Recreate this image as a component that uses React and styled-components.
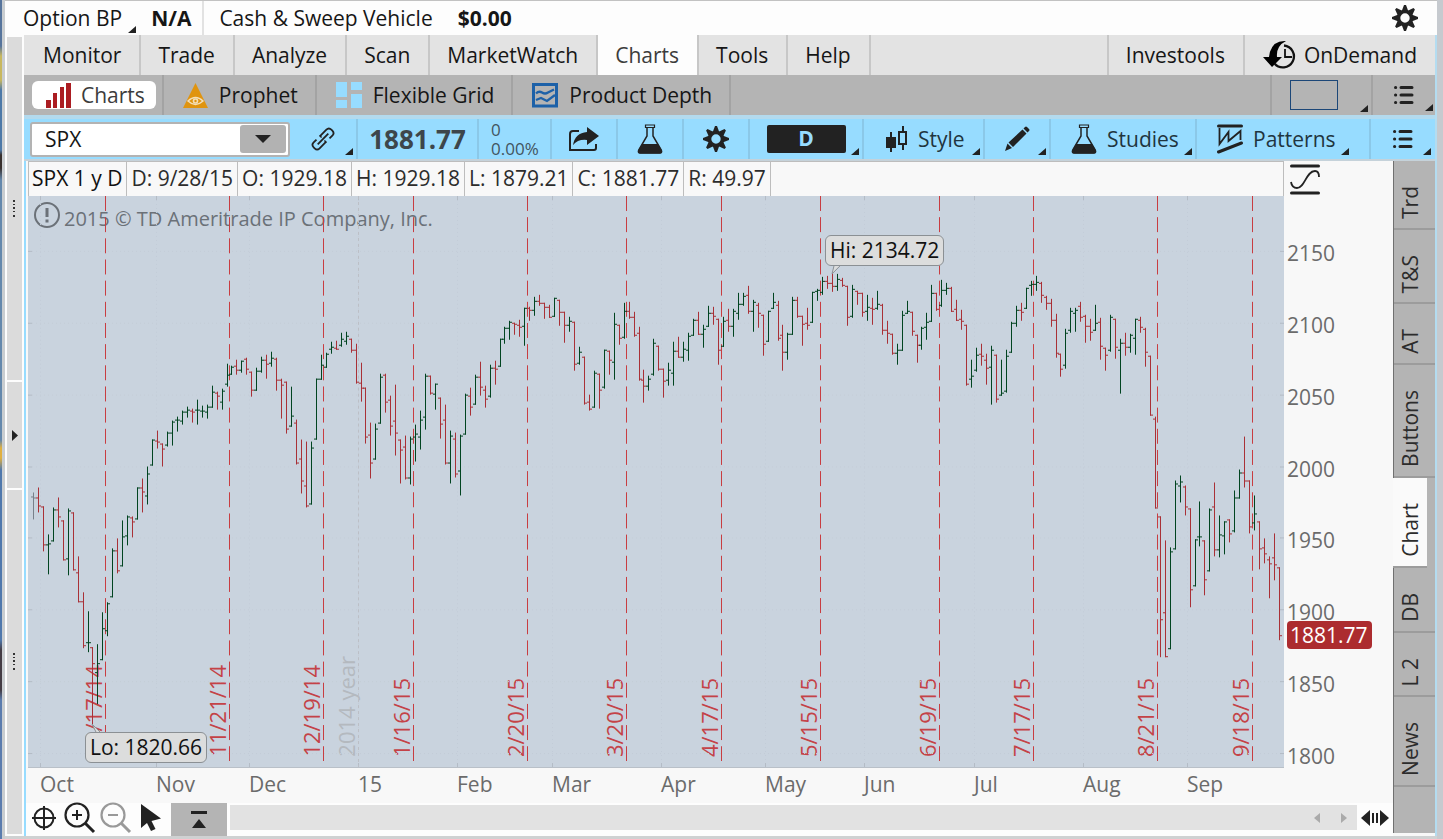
import React from 'react';
import styled, { createGlobalStyle, css } from 'styled-components';

const GlobalStyle = createGlobalStyle`
  * {
    box-sizing: border-box;
  }
  body {
    margin: 0;
    font-family: 'Open Sans', 'Noto Sans', sans-serif;
    font-size: 21px;
    line-height: 28px;
    color: #161616;
    background: #c6cacf;
  }
  button,
  input {
    font: inherit;
    color: inherit;
    margin: 0;
    padding: 0;
    border: 0;
    background: none;
  }
  svg {
    display: block;
    flex: none;
  }
`;

/* price bars: open, high, low, close as heights on the plot, oldest first */
const BARS = [
  [497, 493, 519, 498], [498, 488, 512, 506], [507, 507, 551, 545], [545, 535, 574, 544],
  [541, 508, 541, 510], [510, 498, 527, 517], [521, 521, 560, 560], [559, 509, 575, 511],
  [513, 513, 570, 570], [573, 557, 602, 602], [602, 593, 648, 646], [643, 612, 652, 643],
  [648, 648, 724, 664], [673, 645, 704, 664], [660, 613, 660, 629], [631, 603, 636, 604],
  [597, 549, 597, 551], [551, 539, 573, 571], [566, 521, 566, 537], [536, 516, 545, 517],
  [518, 517, 537, 522], [519, 488, 519, 488], [488, 479, 512, 492], [496, 467, 504, 474],
  [465, 440, 465, 440], [441, 431, 448, 442], [444, 444, 466, 449], [445, 432, 446, 433],
  [433, 421, 445, 422], [420, 417, 431, 420], [421, 411, 424, 412], [412, 407, 417, 410],
  [411, 409, 422, 412], [410, 400, 424, 410], [411, 406, 417, 411], [412, 405, 418, 407],
  [407, 386, 407, 392], [393, 392, 409, 396], [402, 389, 409, 391], [384, 364, 386, 375],
  [374, 366, 374, 367], [366, 360, 374, 370], [370, 361, 372, 361], [359, 358, 374, 369],
  [372, 372, 396, 390], [390, 368, 390, 371], [371, 357, 372, 360], [360, 355, 378, 364],
  [363, 352, 366, 358], [359, 358, 390, 380], [380, 379, 418, 385], [382, 382, 433, 429],
  [426, 387, 426, 416], [423, 420, 464, 463], [459, 440, 493, 481], [486, 442, 507, 506],
  [504, 442, 504, 448], [439, 379, 439, 379], [379, 355, 379, 365], [367, 353, 367, 354],
  [349, 342, 353, 347], [348, 341, 349, 349], [345, 333, 346, 339], [341, 332, 344, 336],
  [339, 339, 352, 350], [350, 344, 383, 382], [383, 363, 401, 388], [388, 388, 443, 437],
  [435, 423, 478, 463], [459, 424, 459, 429], [423, 374, 423, 377], [375, 374, 412, 402],
  [400, 396, 435, 426], [421, 385, 455, 433], [440, 440, 483, 450], [447, 436, 479, 478],
  [478, 437, 484, 439], [437, 425, 461, 434], [437, 411, 449, 420], [417, 374, 429, 376],
  [376, 376, 394, 393], [394, 384, 409, 384], [398, 398, 438, 424], [420, 405, 464, 463],
  [463, 431, 483, 436], [439, 433, 477, 474], [471, 435, 495, 436], [434, 394, 434, 395],
  [396, 388, 415, 407], [404, 375, 404, 377], [377, 362, 395, 387], [390, 386, 407, 399],
  [396, 365, 397, 368], [368, 361, 384, 369], [366, 339, 366, 339], [339, 327, 343, 328],
  [328, 321, 339, 322], [323, 323, 334, 324], [325, 320, 336, 327], [326, 308, 345, 308],
  [308, 307, 320, 310], [310, 297, 315, 301], [301, 295, 305, 303], [303, 303, 318, 307],
  [307, 305, 317, 317], [316, 298, 316, 298], [300, 300, 325, 312], [312, 312, 342, 325],
  [325, 317, 331, 321], [322, 322, 370, 364], [363, 347, 364, 352], [357, 357, 404, 403],
  [402, 395, 410, 409], [407, 371, 407, 373], [374, 374, 408, 390], [387, 350, 388, 350],
  [351, 351, 374, 360], [362, 313, 379, 324], [325, 325, 344, 338], [337, 303, 338, 311],
  [311, 302, 318, 317], [317, 312, 336, 335], [333, 327, 380, 379], [380, 370, 402, 386],
  [386, 376, 390, 379], [374, 339, 375, 343], [346, 346, 370, 369], [369, 369, 397, 381],
  [380, 363, 385, 370], [373, 342, 385, 351], [351, 337, 357, 357], [357, 342, 361, 349],
  [350, 333, 360, 336], [335, 319, 335, 320], [320, 312, 334, 334], [334, 325, 347, 329],
  [326, 306, 326, 313], [313, 307, 324, 316], [319, 319, 364, 350], [346, 317, 346, 321],
  [320, 309, 331, 326], [326, 309, 336, 311], [313, 293, 319, 304], [304, 293, 305, 296],
  [295, 286, 313, 311], [311, 300, 331, 302], [305, 303, 327, 313], [315, 315, 355, 344],
  [341, 311, 341, 311], [308, 293, 308, 302], [305, 301, 340, 338], [335, 325, 370, 352],
  [352, 333, 359, 334], [334, 297, 334, 300], [300, 297, 317, 316], [316, 316, 345, 324],
  [323, 308, 329, 325], [322, 292, 322, 292], [291, 289, 300, 290], [292, 277, 294, 281],
  [281, 276, 288, 283], [283, 273, 291, 286], [286, 274, 290, 279], [280, 278, 286, 285],
  [286, 286, 325, 317], [316, 285, 317, 289], [291, 291, 304, 293], [293, 293, 316, 312],
  [311, 295, 320, 307], [308, 298, 324, 309], [308, 291, 309, 304], [305, 304, 334, 330],
  [330, 321, 343, 333], [334, 334, 354, 353], [353, 344, 364, 350], [350, 311, 350, 315],
  [313, 301, 313, 311], [312, 312, 335, 331], [335, 335, 362, 345], [345, 327, 349, 328],
  [327, 313, 339, 322], [321, 285, 321, 293], [293, 293, 310, 309], [305, 280, 306, 290],
  [290, 283, 294, 288], [288, 287, 311, 311], [309, 300, 320, 320], [319, 310, 329, 321],
  [325, 325, 385, 384], [379, 360, 387, 376], [370, 348, 371, 355], [354, 344, 365, 356],
  [360, 354, 384, 368], [367, 346, 404, 350], [355, 355, 402, 399], [395, 360, 395, 393],
  [391, 350, 392, 356], [352, 322, 352, 323], [323, 306, 326, 310], [310, 303, 320, 312],
  [308, 288, 308, 288], [285, 281, 295, 284], [284, 276, 290, 282], [283, 282, 302, 295],
  [297, 296, 309, 303], [303, 299, 326, 320], [320, 314, 357, 353], [354, 354, 376, 369],
  [365, 329, 368, 333], [330, 308, 332, 311], [313, 308, 331, 310], [306, 302, 321, 317],
  [316, 315, 342, 326], [326, 319, 340, 332], [330, 305, 330, 323], [322, 318, 359, 346],
  [348, 348, 370, 355], [350, 315, 351, 317], [319, 319, 358, 347], [350, 339, 393, 343],
  [343, 333, 355, 347], [347, 334, 352, 335], [338, 319, 354, 319], [320, 317, 332, 327],
  [329, 328, 366, 352], [356, 356, 415, 415], [419, 417, 508, 508], [517, 517, 657, 620],
  [613, 541, 657, 657], [649, 548, 649, 552], [549, 481, 549, 484], [486, 476, 502, 482],
  [487, 486, 515, 507], [509, 509, 607, 590], [586, 540, 586, 540], [537, 502, 546, 537],
  [541, 541, 595, 580], [571, 509, 571, 510], [507, 483, 556, 550], [550, 516, 557, 535],
  [536, 522, 554, 522], [520, 520, 542, 534], [531, 491, 532, 498], [498, 470, 498, 473],
  [473, 437, 487, 481], [481, 481, 533, 527], [523, 496, 530, 514], [522, 522, 569, 549],
  [548, 539, 563, 554], [560, 557, 598, 564], [558, 534, 580, 565], [568, 568, 640, 636],
];

const PLOT = { left: 28, top: 196, width: 1256, height: 572 };
const FIRST_BAR = 33;
const LAST_BAR = 1279;

const EXPIRIES = [
  [105, '10/17/14'], [229, '11/21/14'], [323, '12/19/14'], [413, '1/16/15'],
  [527, '2/20/15'], [626, '3/20/15'], [721, '4/17/15'], [820, '5/15/15'],
  [939, '6/19/15'], [1033, '7/17/15'], [1157, '8/21/15'], [1252, '9/18/15'],
];

const MONTHS = [
  [40, 'Oct', 116], [156, 'Nov', 93], [249, 'Dec', 109], [358, '15', 99],
  [457, 'Feb', 95], [552, 'Mar', 109], [661, 'Apr', 104], [765, 'May', 99],
  [864, 'Jun', 110], [974, 'Jul', 109], [1083, 'Aug', 104], [1187, 'Sep', 97],
];

const PRICES = [2150, 2100, 2050, 2000, 1950, 1900, 1850, 1800];
const PRICE_LINES = [251, 323, 395, 467, 538, 610, 682, 754];

const left = (x) => `${((x - PLOT.left) / PLOT.width) * 100}%`;
const top = (y) => `${((y - PLOT.top) / PLOT.height) * 100}%`;

/* ---------- frame ---------- */

const Page = styled.div`
  display: flex;
  min-height: 100vh;
`;

const DesktopEdge = styled.div`
  width: 5px;
  border-right: 3px solid #c9cdd0;
  background: linear-gradient(
    #56749c 0 46px,
    #c8b860 56px 80px,
    #4d79a8 90px 150px,
    #38302e 155px 168px,
    #6488ac 180px 440px,
    #e0b040 448px 458px,
    #4f78ac 470px 640px,
    #443c44 650px 690px,
    #5b7cae 700px
  );
`;

const Window = styled.div`
  flex: 1;
  min-width: 0;
  display: flex;
  flex-direction: column;
  border-top: 1px solid #c2c2c2;
  border-bottom: 3px solid #cfd1d2;
  background: #fdfdfd;
  margin-right: 6px;
`;

const AccountBar = styled.header`
  display: flex;
  align-items: center;
  height: 34px;
  padding: 0 18px;
  white-space: nowrap;
`;

const AccountItem = styled.div`
  position: relative;
  display: flex;
  align-items: center;
  gap: 25px;
  height: 34px;
  padding-right: 11px;
  & + & {
    padding-left: 15px;
    border-left: 2px solid #e2e2e2;
  }
`;

const IconButton = styled.button`
  display: flex;
  align-items: center;
  justify-content: center;
  width: ${(p) => p.$width || 28}px;
  height: ${(p) => p.$height || 28}px;
  margin-left: ${(p) => (p.$push ? 'auto' : 0)};
`;

const MenuLabel = styled.button`
  position: relative;
  padding-right: 4px;
`;

const Corner = styled.span`
  position: absolute;
  right: ${(p) => p.$right || 3}px;
  bottom: ${(p) => p.$bottom || 4}px;
  border-left: 8px solid transparent;
  border-bottom: 7px solid #222;
`;

const Body = styled.div`
  flex: 1;
  display: flex;
`;

const DockStrip = styled.aside`
  display: flex;
  flex-direction: column;
  gap: 2px;
  width: 15px;
  margin: 2px 2px 2px 2px;
`;

const DockPart = styled.div`
  flex: ${(p) => p.$grow};
  display: flex;
  align-items: center;
  justify-content: center;
  background: #dbdbdb;
`;

const Main = styled.main`
  flex: 1;
  min-width: 0;
  display: flex;
  flex-direction: column;
  border-right: 2px solid #b4dcf0;
`;

/* ---------- navigation ---------- */

const Tabs = styled.nav`
  display: flex;
  height: 40px;
  padding-left: 2px;
  background: #e3e3e3;
`;

const Tab = styled.button`
  display: flex;
  align-items: center;
  gap: 6px;
  padding: 0 18px 0 17px;
  white-space: nowrap;
  border-right: 2px solid #c7c7c7;
  ${(p) => p.$active && css`
    color: #3c3c3c;
    background: #fdfdfd;
  `}
  ${(p) => p.$first && css`
    margin-left: auto;
    border-left: 2px solid #c7c7c7;
  `}
  &:last-child {
    border-right: 0;
  }
`;

const SubTabs = styled.nav`
  display: flex;
  height: 40px;
  background: #b4b4b4;
`;

const SubTab = styled.button`
  position: relative;
  display: flex;
  align-items: center;
  justify-content: ${(p) => (p.$width ? 'center' : 'flex-start')};
  gap: 11px;
  width: ${(p) => (p.$width ? `${p.$width}px` : 'auto')};
  padding: ${(p) => (p.$width ? 0 : '0 17px 0 19px')};
  margin-left: ${(p) => (p.$push ? 'auto' : 0)};
  white-space: nowrap;
  border-right: ${(p) => (p.$last ? 0 : '2px solid #a3a3a3')};
  border-left: ${(p) => (p.$push ? '2px solid #a3a3a3' : 0)};
  ${(p) => p.$active && css`
    padding: 0 6px 0 8px;
  `}
`;

const Pill = styled.span`
  display: flex;
  align-items: center;
  gap: 10px;
  height: 28px;
  padding: 0 11px 0 14px;
  border-radius: 6px;
  background: #fff;
  color: #3c3c3c;
`;

const Swatch = styled.span`
  width: 48px;
  height: 30px;
  margin-right: 16px;
  border: 1px solid #1c4778;
`;

/* ---------- chart toolbar ---------- */

const Toolbar = styled.div`
  display: flex;
  height: 46px;
  border-top: 4px solid #b3daee;
  border-bottom: 2px solid #c5d2da;
  background: #97dcff;
  color: #1f3540;
`;

const Cell = styled.div`
  position: relative;
  display: flex;
  align-items: center;
  justify-content: center;
  width: ${(p) => p.$width}px;
  border-right: 2px solid #8bc8e8;
`;

const ToolButton = styled.button`
  position: relative;
  display: flex;
  align-items: center;
  justify-content: ${(p) => (p.$start ? 'flex-start' : 'center')};
  gap: 10px;
  flex: ${(p) => (p.$width ? 'none' : 1)};
  width: ${(p) => p.$width}px;
  padding-left: ${(p) => (p.$start ? 20 : 0)}px;
  border-right: ${(p) => (p.$width ? '2px solid #8bc8e8' : 0)};
`;

const SymbolCell = styled(Cell)`
  justify-content: flex-start;
  padding-left: 6px;
`;

const SymbolBox = styled.div`
  display: flex;
  align-items: center;
  width: 260px;
  height: 35px;
  padding: 0 2px 0 0;
  border: 2px solid #b3b3b3;
  border-radius: 3px;
  background: #fff;
`;

const SymbolInput = styled.input`
  flex: 1;
  min-width: 0;
  padding-left: 13px;
  color: #161616;
  outline: 0;
`;

const SymbolDrop = styled.button`
  display: flex;
  align-items: center;
  justify-content: center;
  width: 46px;
  height: 28px;
  border-radius: 3px;
  background: #b2b2b2;
`;

const LastPrice = styled.strong`
  font-size: 26px;
  color: #3d464b;
`;

const Change = styled.div`
  width: 100%;
  padding-left: 12px;
  font-size: 17px;
  line-height: 19px;
  color: #42545e;
`;

const Period = styled.span`
  width: 79px;
  height: 28px;
  border-radius: 2px;
  line-height: 26px;
  font-weight: 700;
  color: #97dcff;
  background: #222;
`;

/* ---------- chart ---------- */

const Workspace = styled.div`
  flex: 1;
  display: flex;
  border-left: 2px solid #97dcff;
  background: #f8f8f8;
`;

const ChartArea = styled.section`
  flex: 1;
  min-width: 0;
  display: flex;
  flex-direction: column;
`;

const ChartRow = styled.div`
  flex: 1;
  display: flex;
`;

const PlotColumn = styled.div`
  flex: 1;
  display: flex;
  flex-direction: column;
  margin-left: 2px;
`;

const Status = styled.div`
  display: flex;
  height: 35px;
  border: 1px solid #bdbdbd;
  border-bottom: 0;
  color: #2c2c2c;
`;

const StatusItem = styled.span`
  padding: 2px 4px;
  white-space: nowrap;
  border-right: 1px solid #bdbdbd;
  &:first-child {
    padding-left: 3px;
    color: #111;
  }
`;

const Plot = styled.div`
  position: relative;
  flex: 1;
  background: #c9d3de;
  border-bottom: 1px solid #b9c0c8;
  svg.drawing {
    position: absolute;
    inset: 0;
    width: 100%;
    height: 100%;
  }
`;

const Copyright = styled.p`
  position: absolute;
  top: 0;
  left: 5px;
  display: flex;
  align-items: center;
  gap: 3px;
  margin: 0;
  font-size: 20px;
  color: #6b7178;
  span {
    padding-top: 9px;
  }
`;

const DateLabel = styled.span`
  position: absolute;
  bottom: 10px;
  width: 28px;
  margin-left: -26px;
  font-size: 22px;
  writing-mode: vertical-rl;
  transform: rotate(180deg);
  white-space: nowrap;
  color: ${(p) => (p.$faint ? '#b4b9bf' : '#c44247')};
`;

const Callout = styled.div`
  position: absolute;
  height: 31px;
  padding: 0 4px;
  border: 1px solid #8b9094;
  border-radius: 6px;
  background: #dcdddd;
  color: #111;
  white-space: nowrap;
`;

const Axis = styled.div`
  position: relative;
  display: flex;
  flex-direction: column;
  width: 109px;
  color: #6b6b6b;
`;

const ScaleButton = styled.button`
  height: 35px;
  padding: 2px 0 0 6px;
`;

const AxisPrices = styled.div`
  flex: 1;
  display: flex;
  flex-direction: column;
  justify-content: space-between;
  padding: 47px 0 2px 3px;
  line-height: 20px;
`;

const PriceTag = styled.span`
  position: absolute;
  left: 3px;
  bottom: 119px;
  padding: 0 4px 0 3px;
  border-radius: 4px;
  background: #ac2c2f;
  color: #fff;
`;

const MonthRow = styled.div`
  display: flex;
  height: 35px;
  padding: 2px 109px 0 14px;
  color: #6b6b6b;
`;

const Month = styled.span`
  flex: ${(p) => p.$grow} 1 0;
  min-width: 0;
`;

const FootBar = styled.div`
  display: flex;
  align-items: center;
  height: 33px;
  padding-left: 3px;
  background: #fdfdfd;
`;

const FootButton = styled(IconButton)`
  margin-bottom: 4px;
`;

const CollapseButton = styled(IconButton)`
  align-self: stretch;
  height: auto;
  margin-right: 3px;
  background: #b4b4b4;
`;

const ScrollTrack = styled.div`
  flex: 1;
  display: flex;
  justify-content: flex-end;
  align-items: center;
  gap: 12px;
  height: 25px;
  margin-bottom: 4px;
  padding-right: 6px;
  background: #e2e2e2;
`;

const SideTabs = styled.nav`
  display: flex;
  flex-direction: column;
  width: 42px;
  margin-bottom: 3px;
  border-left: 1px solid #707070;
  background: #b4b4b4;
`;

const SideTab = styled.button`
  display: flex;
  padding: 25px 6px 9px 2px;
  border-bottom: 2px solid #9c9c9c;
  color: #2c2c2c;
  ${(p) => p.$active && css`
    margin-left: -1px;
    padding-left: 3px;
    margin-right: 8px;
    background: #fafafa;
  `}
  span {
    writing-mode: vertical-rl;
    transform: rotate(180deg);
    white-space: nowrap;
  }
`;

/* ---------- icons ---------- */

const Gear = () => (
  <svg width="26" height="26" viewBox="-13 -13 26 26" fill="#222">
    {[0, 45, 90, 135, 180, 225, 270, 315].map((a) => (
      <path key={a} d="M-3.4-6.5L-1-13H1L3.4-6.5z" transform={`rotate(${a})`} />
    ))}
    <circle r="6.4" fill="none" stroke="#222" strokeWidth="3.4" />
  </svg>
);

const Flask = () => (
  <svg width="26" height="30" viewBox="0 0 26 30">
    <path
      d="M10 4v8L2 25.500q-1.500 3.500 1.500 3.500h19q3 0 1.500-3.500L16 12V4"
      fill="none"
      stroke="#222"
      strokeWidth="1.500"
    />
    <path d="M5 20h16l4 6.500q1 3-2 3H3q-3 0-2-3z" fill="#222" />
    <path d="M8.500 1h9v2.500h-9z" fill="none" stroke="#222" strokeWidth="1.200" />
  </svg>
);

const List = () => (
  <svg width="20" height="20" viewBox="0 0 20 20" stroke="#222" strokeWidth="3" strokeLinecap="round">
    <path d="M7 2.500h11M7 10h11M7 17.500h11" />
    <path d="M1.500 2.500h.2M1.500 10h.2M1.500 17.500h.2" />
  </svg>
);

const BarsIcon = () => (
  <svg width="25" height="25" viewBox="0 0 25 25" fill="#ab1d22">
    <path d="M0 17h5v8H0zM7 10h4v15H7zM14 4h4v21h-4zM20 0h5v25h-5z" />
  </svg>
);

const ProphetIcon = () => (
  <svg width="25" height="25" viewBox="0 0 25 25">
    <path d="M12.500 0L25 25H0z" fill="#e0940f" />
    <path d="M5 18q7.500-7 15 0q-7.500 7-15 0z" fill="none" stroke="#f3dfb8" strokeWidth="1.500" />
    <circle cx="12.500" cy="18" r="2.800" fill="#f3dfb8" />
    <circle cx="12.500" cy="18" r="1.200" fill="#e0940f" />
  </svg>
);

const GridIcon = () => (
  <svg width="26" height="26" viewBox="0 0 26 26" fill="#97dcff">
    <path d="M0 0h11v15H0zM15 0h11v8H15zM0 18h11v8H0zM15 12h11v14H15z" />
  </svg>
);

const DepthIcon = () => (
  <svg width="26" height="25" viewBox="0 0 26 25" fill="none" stroke="#1d61a8">
    <path d="M1.500 1.500h23v21.500h-23z" strokeWidth="3" />
    <path d="M4 10.500q3-3 6-1t6 0l6-3M4 17l5-2 6 3 8-6" strokeWidth="2.300" />
  </svg>
);

const OnDemandIcon = () => (
  <svg width="36" height="30" viewBox="0 0 36 30">
    <path d="M24 1Q9 0 7 17H1l9 10 10-10h-5Q14 6 24 1z" fill="#000" />
    <path d="M22 5.500a11 11 0 1 1-9.500 18" fill="none" stroke="#111" strokeWidth="2.300" />
    <path d="M23 9v8h7" fill="none" stroke="#111" strokeWidth="1.800" />
  </svg>
);

const LinkIcon = () => (
  <svg width="24" height="24" viewBox="-12 -12 24 24" fill="none" stroke="#222" strokeWidth="1.800">
    <g transform="rotate(-45)">
      <path d="M0-4.200h9q3.500 0 3.500 3.500v1.400q0 3.500-3.500 3.500H5" />
      <path d="M0 4.200h-9q-3.500 0-3.500-3.500v-1.400q0-3.500 3.500-3.500H-5" />
      <path d="M-7.500 0h15" />
      <path d="M0-5v3M0 5v-3" strokeWidth="1.400" />
    </g>
  </svg>
);

const ShareIcon = () => (
  <svg width="30" height="26" viewBox="0 0 30 26">
    <path d="M10 5H4q-3 0-3 3v16h24q2 0 2-2v-4" fill="none" stroke="#222" strokeWidth="2" />
    <path d="M18 1l12 9-12 9v-5q-9-1-14 5Q6 7 18 6z" fill="#222" />
  </svg>
);

const StyleIcon = () => (
  <svg width="24" height="26" viewBox="-2 0 24 26" stroke="#222" strokeWidth="2">
    <path d="M5 6v20M17 0v24" />
    <path d="M1 12h8v9H1z" fill="#222" />
    <path d="M13 6h7v12h-7z" fill="#97dcff" />
  </svg>
);

const Pencil = () => (
  <svg width="26" height="26" viewBox="0 0 26 26" fill="#222">
    <path d="M18.500 3.500l4 4L9 21l-4.500-4.500zM3.500 17.500L8 22l-7 3zM19.500 2.500l1.500-1.500q1-1 2 0l2 2q1 1 0 2l-1.500 1.500z" />
  </svg>
);

const PatternsIcon = () => (
  <svg width="26" height="30" viewBox="1 0 26 30" fill="none" stroke="#222">
    <path d="M2.500 2h23M2.500 28l23-9" strokeWidth="3" strokeLinecap="round" />
    <path d="M3.500 4v16l9-12v9l12-10v9" strokeWidth="1.800" />
  </svg>
);

const ScaleIcon = () => (
  <svg width="30" height="31" viewBox="0 0 30 31" fill="none" stroke="#222">
    <path d="M1.500 2h27M1.500 29h27" strokeWidth="3" strokeLinecap="round" />
    <path d="M1 18q1 6 6 6c8 0 9-17 18-17q4 0 4 6" strokeWidth="1.800" />
  </svg>
);

const Triangle = ({ d, fill = '#222', width = 16, height = 8 }) => (
  <svg width={width} height={height} viewBox={`0 0 ${width} ${height}`} fill={fill}>
    <path d={d} />
  </svg>
);

const Dots = () => (
  <svg width="3" height="17" viewBox="0 0 3 17" fill="#333">
    <path d="M0 0h2v2H0zM0 4h2v1H0zM0 7h2v2H0zM0 11h2v1H0zM0 15h2v2H0z" />
  </svg>
);

const Lens = ({ sign, color }) => (
  <svg width="32" height="32" viewBox="0 0 32 32" fill="none" stroke={color}>
    <circle cx="13" cy="13" r="11.500" strokeWidth="2.200" />
    <path d="M21.500 21.500l8.500 8.500" strokeWidth="3" />
    <path d={sign} strokeWidth="2" />
  </svg>
);

const Crosshair = () => (
  <svg width="24" height="24" viewBox="0 0 24 24" fill="none" stroke="#222" strokeWidth="2">
    <circle cx="12" cy="12" r="9.500" />
    <path d="M12 0v24M0 12h24" />
  </svg>
);

const Pointer = () => (
  <svg width="22" height="28" viewBox="0 0 22 28" fill="#222">
    <path d="M1 0v24l6-5 4 8 4.500-2-4-8L21 14.500z" />
  </svg>
);

const Notice = () => (
  <svg width="28" height="28" viewBox="0 0 28 28" fill="none" stroke="#6b7178">
    <circle cx="14" cy="14" r="12" strokeWidth="2" />
    <path d="M14 7v9M14 18.500v3" strokeWidth="3" />
  </svg>
);

/* ---------- drawing of the plot ---------- */

function barPath(bars, wanted) {
  return bars
    .map(([open, high, low, close], i) => {
      const kind = i === 0 ? 'flat' : close > open ? 'down' : 'up';
      if (kind !== wanted) return '';
      const x = Math.floor(FIRST_BAR + (i * (LAST_BAR - FIRST_BAR)) / (bars.length - 1) + 0.4);
      return `M${x + 0.5} ${high}V${low + 1}M${x - 2} ${open + 0.5}h3M${x} ${close + 0.5}h3`;
    })
    .join('');
}

function PlotDrawing() {
  const { left: x0, top: y0, width, height } = PLOT;
  return (
    <svg
      className="drawing"
      viewBox={`${x0} ${y0} ${width} ${height}`}
      preserveAspectRatio="none"
      fill="none"
      shapeRendering="crispEdges"
    >
      {MONTHS.map(([x]) => (
        <g key={x}>
          <path d={`M${x + 0.5} ${y0}v${height}`} stroke="#c3ccd8" strokeDasharray="1 3" />
          <path d={`M${x + 0.5} ${y0}v4M${x + 0.5} 764v4`} stroke="#b4bcc6" />
        </g>
      ))}
      {PRICE_LINES.map((y) => (
        <g key={y}>
          <path d={`M${x0} ${y + 0.5}h${width}`} stroke="#c4cdd7" strokeDasharray="1 3" />
          <path d={`M${x0} ${y + 0.5}h4M1280 ${y + 0.5}h4`} stroke="#b4bcc6" />
        </g>
      ))}
      <path d="M358.500 196V768" stroke="#bcbfc6" strokeDasharray="3 3" />
      {EXPIRIES.map(([x]) => (
        <path key={x} d={`M${x + 0.5} 196V762`} stroke="#c83c40" strokeDasharray="15 6.200" />
      ))}
      <path d={barPath(BARS, 'flat')} stroke="#77808a" />
      <path d={barPath(BARS, 'down')} stroke="#a92f35" />
      <path d={barPath(BARS, 'up')} stroke="#00431f" />
    </svg>
  );
}

const STATUS = ['SPX 1 y D', 'D: 9/28/15', 'O: 1929.18', 'H: 1929.18', 'L: 1879.21', 'C: 1881.77', 'R: 49.97'];
const MAIN_TABS = ['Monitor', 'Trade', 'Analyze', 'Scan', 'MarketWatch', 'Charts', 'Tools', 'Help'];
const SIDE_TABS = ['Trd', 'T&S', 'AT', 'Buttons', 'Chart', 'DB', 'L 2', 'News'];

export default function App() {
  return (
    <>
      <GlobalStyle />
      <Page>
        <DesktopEdge />
        <Window>
          <AccountBar>
            <AccountItem>
              <MenuLabel>
                Option BP
                <Corner $right={-10} $bottom={-1} />
              </MenuLabel>
              <strong>N/A</strong>
            </AccountItem>
            <AccountItem>
              <span>Cash &amp; Sweep Vehicle</span>
              <strong>$0.00</strong>
            </AccountItem>
            <IconButton $push aria-label="Setup">
              <Gear />
            </IconButton>
          </AccountBar>
          <Body>
            <DockStrip>
              <DockPart $grow={344}>
                <Dots />
              </DockPart>
              <DockPart $grow={106}>
                <Triangle width={6} height={11} d="M0 0l6 5.500-6 5.500z" />
              </DockPart>
              <DockPart $grow={345}>
                <Dots />
              </DockPart>
            </DockStrip>
            <Main>
              <Tabs>
                {MAIN_TABS.map((name) => (
                  <Tab key={name} $active={name === 'Charts'}>{name}</Tab>
                ))}
                <Tab $first>Investools</Tab>
                <Tab>
                  <OnDemandIcon />
                  OnDemand
                </Tab>
              </Tabs>
              <SubTabs>
                <SubTab $active>
                  <Pill>
                    <BarsIcon />
                    Charts
                  </Pill>
                </SubTab>
                <SubTab><ProphetIcon />Prophet</SubTab>
                <SubTab><GridIcon />Flexible Grid</SubTab>
                <SubTab><DepthIcon />Product Depth</SubTab>
                <SubTab $push $width={103} aria-label="Layout">
                  <Swatch />
                  <Corner $right={3} $bottom={3} />
                </SubTab>
                <SubTab $width={62} $last aria-label="List">
                  <List />
                  <Corner $right={2} $bottom={4} />
                </SubTab>
              </SubTabs>
              <Toolbar>
                <SymbolCell $width={334}>
                  <SymbolBox>
                    <SymbolInput aria-label="Symbol" defaultValue="SPX" />
                    <SymbolDrop aria-label="Symbols">
                      <Triangle d="M0 0h16l-8 8z" />
                    </SymbolDrop>
                  </SymbolBox>
                  <ToolButton aria-label="Link">
                    <LinkIcon />
                  </ToolButton>
                  <Corner />
                </SymbolCell>
                <Cell $width={121}>
                  <LastPrice>1881.77</LastPrice>
                </Cell>
                <Cell $width={73}>
                  <Change>
                    <div>0</div>
                    <div>0.00%</div>
                  </Change>
                </Cell>
                <ToolButton $width={66} aria-label="Share"><ShareIcon /></ToolButton>
                <ToolButton $width={66} aria-label="Edit studies"><Flask /></ToolButton>
                <ToolButton $width={66} aria-label="Chart settings"><Gear /></ToolButton>
                <ToolButton $width={114}>
                  <Period>D</Period>
                  <Corner />
                </ToolButton>
                <ToolButton $width={121} $start>
                  <StyleIcon />
                  Style
                  <Corner />
                </ToolButton>
                <ToolButton $width={66} aria-label="Drawings">
                  <Pencil />
                  <Corner />
                </ToolButton>
                <ToolButton $width={146} $start>
                  <Flask />
                  Studies
                  <Corner />
                </ToolButton>
                <ToolButton $width={174} $start>
                  <PatternsIcon />
                  Patterns
                  <Corner $right={20} />
                </ToolButton>
                <ToolButton aria-label="Chart menu">
                  <List />
                  <Corner $right={4} />
                </ToolButton>
              </Toolbar>
              <Workspace>
                <ChartArea>
                  <ChartRow>
                    <PlotColumn>
                      <Status>
                        {STATUS.map((text) => <StatusItem key={text}>{text}</StatusItem>)}
                      </Status>
                      <Plot>
                        <Copyright>
                          <Notice />
                          <span>2015 © TD Ameritrade IP Company, Inc.</span>
                        </Copyright>
                        {EXPIRIES.map(([x, text]) => (
                          <DateLabel key={text} style={{ left: left(x) }}>{text}</DateLabel>
                        ))}
                        <DateLabel $faint style={{ left: left(358) }}>2014 year</DateLabel>
                        <PlotDrawing />
                        <Callout style={{ left: left(825), top: top(235) }}>Hi: 2134.72</Callout>
                        <Callout style={{ left: left(85), top: top(733) }}>Lo: 1820.66</Callout>
                        <svg className="drawing" viewBox="28 196 1256 572" preserveAspectRatio="none">
                          <path d="M834 266l-2 8 8-8" fill="#dcdddd" stroke="#8b9094" />
                          <path d="M96 733l-4-8 8 8" fill="#dcdddd" stroke="#8b9094" />
                        </svg>
                      </Plot>
                    </PlotColumn>
                    <Axis>
                      <ScaleButton aria-label="Scale"><ScaleIcon /></ScaleButton>
                      <AxisPrices>
                        {PRICES.map((price) => <span key={price}>{price}</span>)}
                      </AxisPrices>
                      <PriceTag>1881.77</PriceTag>
                    </Axis>
                  </ChartRow>
                  <MonthRow>
                    {MONTHS.map(([x, name, days]) => <Month key={x} $grow={days}>{name}</Month>)}
                  </MonthRow>
                  <FootBar>
                    <FootButton $width={30} aria-label="Crosshair"><Crosshair /></FootButton>
                    <FootButton $width={42} aria-label="Zoom in">
                      <Lens color="#222" sign="M13 8v10M8 13h10" />
                    </FootButton>
                    <FootButton $width={30} aria-label="Zoom out">
                      <Lens color="#999" sign="M8 13h10" />
                    </FootButton>
                    <FootButton $width={40} aria-label="Pointer"><Pointer /></FootButton>
                    <CollapseButton $width={56} aria-label="Collapse">
                      <Triangle width={16} height={18} d="M0 0h16v3H0zM8 8l7 9H1z" />
                    </CollapseButton>
                    <ScrollTrack>
                      <IconButton $width={15} aria-label="Scroll left">
                        <Triangle width={6} height={10} fill="#aaa" d="M6 0v10L0 5z" />
                      </IconButton>
                      <IconButton $width={15} aria-label="Scroll right">
                        <Triangle width={6} height={10} fill="#aaa" d="M0 0v10l6-5z" />
                      </IconButton>
                    </ScrollTrack>
                    <FootButton $width={36} aria-label="Fit">
                      <Triangle
                        width={28}
                        height={16}
                        d="M9 0v16L0 8zM19 0v16l9-8zM11 3h2v10h-2zM15 3h2v10h-2z"
                      />
                    </FootButton>
                  </FootBar>
                </ChartArea>
                <SideTabs>
                  {SIDE_TABS.map((name) => (
                    <SideTab key={name} $active={name === 'Chart'}>
                      <span>{name}</span>
                    </SideTab>
                  ))}
                </SideTabs>
              </Workspace>
            </Main>
          </Body>
        </Window>
      </Page>
    </>
  );
}
